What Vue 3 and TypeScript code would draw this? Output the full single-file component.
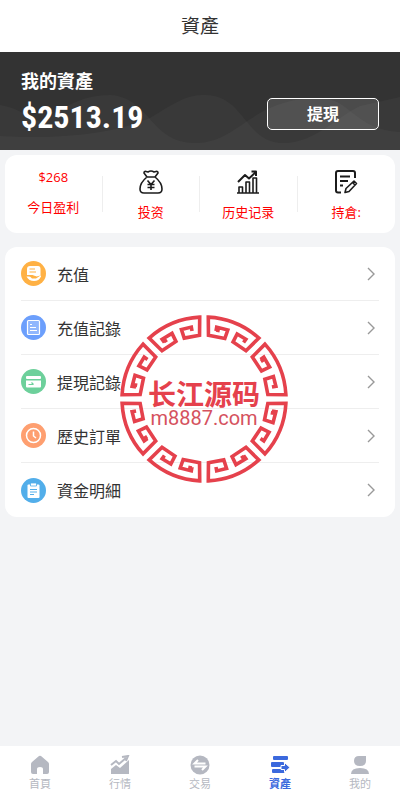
<script setup lang="ts">
interface MenuItem { id: string; label: string; color: string }
interface TabItem { id: string; label: string }

const menu: MenuItem[] = [
  { id: 'recharge', label: '充值', color: '#ffb144' },
  { id: 'rechargeLog', label: '充值記錄', color: '#6c9ffc' },
  { id: 'withdrawLog', label: '提現記錄', color: '#6dd09b' },
  { id: 'orders', label: '歷史訂單', color: '#fe9f70' },
  { id: 'funds', label: '資金明細', color: '#52aeea' },
]

const tabs: TabItem[] = [
  { id: 'home', label: '首頁' },
  { id: 'market', label: '行情' },
  { id: 'trade', label: '交易' },
  { id: 'assets', label: '資產' },
  { id: 'mine', label: '我的' },
]
const activeTab = 'assets'

// Point on the seal's ring, angle measured clockwise from the top.
function polar(radius: number, degrees: number): string {
  const a = (degrees * Math.PI) / 180
  return `${(85 + radius * Math.sin(a)).toFixed(2)} ${(85 - radius * Math.cos(a)).toFixed(2)}`
}

// One meander of the fret border: outer arc with a hook folded in at each end.
function meander(start: number): string {
  const p = (r: number, a: number) => polar(r, start + a)
  return [
    `M${p(70, 13)}`, `L${p(70, 10)}`, `M${p(69, 10)}`, `L${p(73, 10)}`, `L${p(73, 19)}`, `L${p(64, 19)}`, `L${p(64, 4)}`, `L${p(82, 3)}`,
    `A82 82 0 0 1 ${p(82, 42)}`,
    `L${p(64, 41)}`, `L${p(64, 27)}`, `L${p(73, 27)}`, `L${p(73, 35)}`, `L${p(69, 35)}`,
  ].join(' ')
}
const border = Array.from({ length: 8 }, (_, i) => meander(i * 45))
</script>

<template>
  <div class="page">
    <header class="title-bar"><h1>資產</h1></header>

    <section class="hero">
      <svg class="waves" viewBox="0 0 400 98" preserveAspectRatio="none" aria-hidden="true">
        <path d="M0 53C20 56 30 67 42 70C65 53 85 43 110 43C150 45 150 91 195 91C240 91 250 46 320 46C350 46 355 78 400 80V98H0Z" />
        <path d="M0 84C60 87 110 83 150 66C175 51 185 43 205 43C245 43 245 91 283 91C315 91 335 66 360 54L400 45V98H0Z" />
      </svg>
      <div class="balance">
        <h2>我的資產</h2>
        <p>$2513.19</p>
      </div>
      <button class="withdraw" type="button">提現</button>
    </section>

    <main>
      <nav class="card stats">
        <a class="stat profit" href="#profit"><span>$268</span><span>今日盈利</span></a>
        <a class="stat" href="#invest">
          <svg viewBox="0 0 24 24" aria-hidden="true">
            <path d="M8 7C3 11 1 15 1 19q0 4 4 4h14q4 0 4-4c0-4-2-8-7-12M8 7h8M8 7 5 3q0-2 2-1.500l2 .500q3-2 6 0l2-.500q2-.500 2 1.500l-3 4" />
            <path d="m8.500 10.500 3.500 4 3.500-4M8.500 14.500h7M8.500 17.500h7M12 14v6" />
          </svg>
          <span>投资</span>
        </a>
        <a class="stat" href="#history">
          <svg viewBox="0 0 24 24" aria-hidden="true">
            <path d="M1 23h22M3 23v-6h3.500v6M10 23V12h3.500v11M17 23V8h3.500v15" />
            <path d="m2 12 7-7 4 3.500L20 2M15.500 1.500H20V6" stroke-width="2" />
          </svg>
          <span>历史记录</span>
        </a>
        <a class="stat" href="#positions">
          <svg viewBox="0 0 24 24" aria-hidden="true">
            <path d="M7 22.500H4q-2 0-2-2V3q0-2 2-2h15q2 0 2 2v5M6 6.500h10M6 11h8M6 15.500h3" stroke-width="2" />
            <path d="m11 22.500 1-4 8-7.500 2.500 2.500-7.500 8ZM18.500 12.500l2.500 2.500" />
          </svg>
          <span>持倉:</span>
        </a>
      </nav>

      <nav class="card menu">
        <a v-for="item in menu" :key="item.id" class="row" :href="'#' + item.id">
          <svg class="badge" viewBox="0 0 25 25" aria-hidden="true">
            <circle cx="12.500" cy="12.500" r="12.500" :fill="item.color" />
            <g v-if="item.id === 'recharge'">
              <path d="M9 5h8q2.500 0 2.500 3v6.500l-4 1-4-1.500H6V8q0-3 3-3Z" fill="#fff" />
              <path d="M8.500 8h5.500M8.500 11h6.500" stroke="#ffb144" stroke-width="1.200" />
              <path d="M5.500 14.500h3q2 0 3 1.500h3q1.500 1 0 1.500h-3" fill="none" stroke="#ffb144" stroke-width="1.200" />
              <path d="M5.500 15.500h2.500q1.500 0 3 2h4l4.500-3q1 0 .500 1-2 4.500-7 4.500-5 0-7.500-4.500Z" fill="#fff" />
            </g>
            <g v-else-if="item.id === 'rechargeLog'" fill="none" stroke="#fff" stroke-width="1.200">
              <rect x="6.500" y="5.500" width="12" height="14" rx="1" fill="#fff" fill-opacity=".25" />
              <path d="M9 9.500h2M9 12.500h6M9 15.500h7" />
            </g>
            <g v-else-if="item.id === 'withdrawLog'">
              <rect x="5" y="7" width="15" height="3" rx="1" fill="#fff" />
              <path d="M5 11.500h15v6q0 1-1 1H6q-1 0-1-1Z" fill="#fff" />
              <path d="M7.500 15.500h5m-2-2 2 2" fill="none" stroke="#6dd09b" stroke-width="1.200" />
            </g>
            <g v-else-if="item.id === 'orders'" fill="none" stroke="#fff" stroke-width="1.500">
              <circle cx="12.500" cy="12.500" r="7" />
              <path d="M12.500 8.500v4.500l2.500 2" />
            </g>
            <g v-else>
              <path d="M7.500 6.500h10q1 0 1 1v11.500q0 1-1 1h-10q-1 0-1-1V7.500q0-1 1-1Z" fill="#fff" />
              <path d="M9.500 5h6v3h-6Z" fill="#fff" stroke="#52aeea" stroke-width=".8" />
              <path d="M9 11.500h7M9 14h7M9 16.500h4" stroke="#52aeea" />
            </g>
          </svg>
          <span>{{ item.label }}</span>
          <svg class="chevron" viewBox="0 0 8 14" aria-hidden="true"><path d="m1 1 6 6-6 6" /></svg>
        </a>
      </nav>
    </main>

    <svg class="seal" viewBox="0 0 170 170" role="img" aria-label="长江源码 m8887.com">
      <path v-for="(d, i) in border" :key="i" :d="d" />
      <text class="seal-name" x="85" y="91">长江源码</text>
      <text class="seal-site" x="85" y="111">m8887.com</text>
    </svg>

    <nav class="tabs">
      <a v-for="tab in tabs" :key="tab.id" :href="'#' + tab.id" :class="{ active: tab.id === activeTab }">
        <svg viewBox="0 0 20 20" aria-hidden="true">
          <path v-if="tab.id === 'home'" d="M9 1q1-.700 2 0l7 6q1 1 1 2v8q0 2-2 2h-4v-5q0-2-3-2t-3 2v5H3q-2 0-2-2V9q0-1 1-2Z" />
          <template v-else-if="tab.id === 'market'">
            <path d="m1 14 5-4 4 3 9-8v14H1Z" />
            <path class="line" d="m1 10 5-4 3 3 7-6M12 2l6-1-2 5" />
          </template>
          <template v-else-if="tab.id === 'trade'">
            <circle cx="10" cy="10" r="9.500" />
            <path class="cut" d="M15.500 8.500h-11L8 5M4.500 11.500h11L12 15" />
          </template>
          <template v-else-if="tab.id === 'assets'">
            <path d="M4 1h13q1 0 1 1v2q0 1-1 1H4q-1 0-1-1V2q0-1 1-1ZM2 7h11q1 0 1 1v3q0 1-1 1H2q-1 0-1-1V8q0-1 1-1ZM3 14h12v4H3q-1 0-1-1v-2q0-1 1-1Z" />
            <path class="arrow" d="M11 10.500h3.500V7.500l5.500 5-5.500 5v-3H11Z" />
          </template>
          <path v-else d="M9 1h7v5q0 5-6 5-6 0-6-5 0-5 5-5ZM1 19q0-6 9-6t9 6Z" />
        </svg>
        <span>{{ tab.label }}</span>
      </a>
    </nav>
  </div>
</template>

<style>
body {
  background: #f3f4f6;
}
</style>

<style scoped>
.page {
  position: relative;
  min-height: 100vh;
  box-sizing: border-box;
  padding-bottom: 50px;
  color: #333;
  font-family: "Open Sans", "Noto Sans CJK TC", "Noto Sans CJK SC", sans-serif;
}
a {
  color: inherit;
  text-decoration: none;
}
h1, h2, p {
  margin: 0;
}
.title-bar {
  background: #fff;
  text-align: center;
}
h1 {
  font-size: 19px;
  font-weight: 400;
  line-height: 52px;
}
.hero {
  position: relative;
  display: flex;
  justify-content: space-between;
  align-items: flex-end;
  height: 98px;
  box-sizing: border-box;
  padding: 16px 21px 20px;
  background: #333;
  color: #fff;
}
.waves {
  position: absolute;
  inset: 0;
  width: 100%;
  height: 100%;
  fill: rgba(255, 255, 255, 0.03);
}
.balance {
  position: relative;
  align-self: flex-start;
}
h2 {
  font-size: 18px;
  line-height: 26px;
}
.balance p {
  font-family: "Roboto Condensed", "Liberation Sans Narrow", Roboto, sans-serif;
  font-size: 32px;
  font-weight: 700;
  line-height: 46px;
}
.withdraw {
  position: relative;
  width: 112px;
  height: 32px;
  padding: 0;
  border: 1px solid #fff;
  border-radius: 5px;
  background: rgba(255, 255, 255, 0.12);
  color: #fff;
  font: inherit;
  font-size: 16px;
  font-weight: 700;
  line-height: 24px;
}
main {
  display: flex;
  flex-direction: column;
  gap: 14px;
  padding: 5px;
}
.card {
  border-radius: 12px;
  background: #fff;
}
.stats {
  display: grid;
  grid-template-columns: repeat(4, 1fr);
  align-items: center;
  height: 78px;
  color: #f00;
  font-size: 13px;
  line-height: 20px;
}
.stat {
  display: flex;
  flex-direction: column;
  align-items: center;
  justify-content: center;
  gap: 8px;
  height: 36px;
}
.stat:not(:last-child) {
  border-right: 1px solid #eee;
}
.stat svg {
  flex: none;
  width: 24px;
  height: 24px;
  margin-top: 4px;
  fill: none;
  stroke: #1c1c1c;
  stroke-width: 1.6;
  stroke-linejoin: round;
}
.profit {
  gap: 10px;
}
.profit span:first-child {
  margin-top: -4px;
}
.menu {
  padding: 0 16px;
}
.row {
  display: flex;
  align-items: center;
  gap: 11px;
  height: 54px;
  box-sizing: border-box;
  font-size: 16px;
}
.row:not(:last-child) {
  border-bottom: 1px solid #eee;
}
.badge {
  width: 25px;
  height: 25px;
}
.chevron {
  width: 8px;
  height: 14px;
  margin-left: auto;
  margin-right: 4px;
  fill: none;
  stroke: #999;
  stroke-width: 1.4;
}
.seal {
  position: absolute;
  top: 314px;
  left: calc(50% + 4px);
  width: 170px;
  height: 170px;
  transform: translateX(-50%);
  fill: none;
  stroke: #e5414c;
  stroke-width: 3.6;
  pointer-events: none;
}
.seal text {
  fill: #e5414c;
  stroke: none;
  text-anchor: middle;
}
.seal .seal-name {
  font-family: "Noto Sans CJK SC", sans-serif;
  font-size: 28px;
  font-weight: 700;
}
.seal .seal-site {
  font-family: Roboto, "Liberation Sans", sans-serif;
  font-size: 20px;
  fill: #d5525e;
}
.tabs {
  position: fixed;
  right: 0;
  bottom: 0;
  left: 0;
  display: grid;
  grid-template-columns: repeat(5, 1fr);
  height: 50px;
  box-sizing: border-box;
  padding-top: 5px;
  background: #fff;
  color: #b5b8c1;
  font-size: 11px;
  line-height: 16px;
}
.tabs a {
  display: flex;
  flex-direction: column;
  align-items: center;
  justify-content: center;
  gap: 1px;
}
.tabs svg {
  width: 20px;
  height: 20px;
  fill: currentColor;
}
.tabs .line {
  fill: none;
  stroke: currentColor;
  stroke-width: 2;
}
.tabs .cut {
  fill: none;
  stroke: #fff;
  stroke-width: 2;
}
.tabs .arrow {
  stroke: #fff;
  stroke-width: 1;
}
.tabs .active {
  color: #3b69dd;
  font-weight: 700;
}
</style>
